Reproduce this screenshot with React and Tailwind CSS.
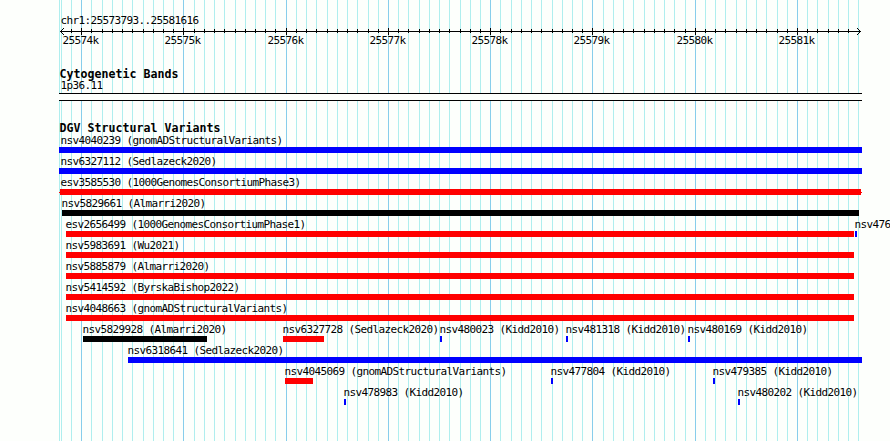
import React from "react";

const BP_START = 25573793;
const PX_PER_BP = 800 / 7823;
const toX = (bp) => Math.round(60 + (bp - BP_START) * PX_PER_BP);

const ticks = Array.from({ length: 79 }, (_, i) => {
  const bp = 25573800 + i * 100;
  return { bp, x: toX(bp), major: bp % 1000 === 0 };
}).filter((t) => t.x >= 60 && t.x <= 859);

const colors = { blue: "bg-[#0000ff]", red: "bg-[#ff0000]", black: "bg-black" };

const rows = [
  [{ name: "nsv4040239 (gnomADStructuralVariants)", from: 59, to: 862, at: 60, color: "blue" }],
  [{ name: "nsv6327112 (Sedlazeck2020)", from: 59, to: 862, at: 60, color: "blue" }],
  [{ name: "esv3585530 (1000GenomesConsortiumPhase3)", from: 60, to: 861, at: 60, color: "red", overflow: true }],
  [{ name: "nsv5829661 (Almarri2020)", from: 62, to: 859, color: "black" }],
  [
    { name: "esv2656499 (1000GenomesConsortiumPhase1)", from: 66, to: 854, color: "red" },
    { name: "nsv476", from: 855, to: 857, color: "blue" },
  ],
  [{ name: "nsv5983691 (Wu2021)", from: 66, to: 854, color: "red" }],
  [{ name: "nsv5885879 (Almarri2020)", from: 66, to: 854, color: "red" }],
  [{ name: "nsv5414592 (ByrskaBishop2022)", from: 66, to: 854, color: "red" }],
  [{ name: "nsv4048663 (gnomADStructuralVariants)", from: 66, to: 854, color: "red" }],
  [
    { name: "nsv5829928 (Almarri2020)", from: 83, to: 207, color: "black" },
    { name: "nsv6327728 (Sedlazeck2020)", from: 283, to: 324, color: "red" },
    { name: "nsv480023 (Kidd2010)", from: 440, to: 442, color: "blue" },
    { name: "nsv481318 (Kidd2010)", from: 566, to: 568, color: "blue" },
    { name: "nsv480169 (Kidd2010)", from: 688, to: 690, color: "blue" },
  ],
  [{ name: "nsv6318641 (Sedlazeck2020)", from: 128, to: 862, color: "blue" }],
  [
    { name: "nsv4045069 (gnomADStructuralVariants)", from: 285, to: 313, color: "red" },
    { name: "nsv477804 (Kidd2010)", from: 551, to: 553, color: "blue" },
    { name: "nsv479385 (Kidd2010)", from: 713, to: 715, color: "blue" },
  ],
  [
    { name: "nsv478983 (Kidd2010)", from: 344, to: 346, color: "blue" },
    { name: "nsv480202 (Kidd2010)", from: 738, to: 740, color: "blue" },
  ],
];

// Fixed-pitch cells: every character occupies exactly 6px.
function Label({ children }) {
  return (
    <span className="block h-3 pl-[0.5px] text-[11px] leading-3 tracking-[-0.622px] whitespace-pre">{children}</span>
  );
}

function Heading({ children }) {
  return (
    <h2 className="ml-[59.5px] h-3 text-[11.6px] leading-3 font-bold tracking-[0.017px] whitespace-pre">{children}</h2>
  );
}

function GridLines() {
  return (
    <svg className="absolute inset-0" width="890" height="441" shapeRendering="crispEdges" aria-hidden="true">
      <rect x="59" width="1" height="441" fill="#afeeee" />
      {ticks.map((t) => (
        <rect key={t.bp} x={t.x} width="1" height="441" fill={t.major ? "#87ceeb" : "#afeeee"} />
      ))}
    </svg>
  );
}

function Ruler() {
  return (
    <svg className="block" width="890" height="8" shapeRendering="crispEdges" aria-hidden="true">
      <rect x="60" y="4" width="801" height="1" />
      {ticks.filter((t) => t.x > 61 && t.x < 858).map((t) => (
        <rect key={t.bp} x={t.x} y={t.major ? 1 : 2} width="1" height={t.major ? 7 : 4} />
      ))}
      {[1, 2, 3].map((d) => (
        <g key={d}>
          <rect x={60 + d} y={4 - d} width="1" height="1" />
          <rect x={60 + d} y={4 + d} width="1" height="1" />
          <rect x={860 - d} y={4 - d} width="1" height="1" />
          <rect x={860 - d} y={4 + d} width="1" height="1" />
        </g>
      ))}
    </svg>
  );
}

function Feature({ f }) {
  return (
    <div className="[grid-area:1/1]">
      <div style={{ marginLeft: f.at ?? f.from - 1 }}>
        <Label>{f.name}</Label>
      </div>
      <div className="flex h-1.5 items-center" style={{ marginLeft: f.overflow ? f.from - 1 : f.from }}>
        {f.overflow && <i className="h-px w-px bg-[#ff0000]" />}
        <div className={`h-1.5 ${colors[f.color]}`} style={{ width: f.to - f.from }} />
        {f.overflow && <i className="h-px w-px bg-[#ff0000]" />}
      </div>
    </div>
  );
}

export default function App() {
  return (
    <main className="relative h-[441px] w-[890px] overflow-hidden bg-[#fdfffc] font-['DejaVu_Sans_Mono',monospace] text-black">
      <GridLines />
      <div className="relative flex flex-col">
        <div className="mt-[15px] ml-[60px]">
          <Label>chr1:25573793..25581616</Label>
        </div>
        <Ruler />
        <div className="grid h-3">
          {ticks.filter((t) => t.major).map((t) => (
            <div key={t.bp} className="[grid-area:1/1]" style={{ marginLeft: t.x - 19 }}>
              <Label>{`${t.bp / 1000}k`}</Label>
            </div>
          ))}
        </div>
        <section className="mt-[21px]">
          <Heading>Cytogenetic Bands</Heading>
          <div className="ml-[60px]">
            <Label>1p36.11</Label>
          </div>
          <div className="mt-px ml-[59px] h-2 w-[803px] border-y border-black bg-[#fdfffc]" />
        </section>
        <section className="mt-[21px]">
          <Heading>DGV Structural Variants</Heading>
          <div className="mt-px flex flex-col gap-[3px]">
            {rows.map((row, i) => (
              <div key={i} className="grid h-[18px] grid-cols-1">
                {row.map((f) => (
                  <Feature key={f.name} f={f} />
                ))}
              </div>
            ))}
          </div>
        </section>
      </div>
    </main>
  );
}
